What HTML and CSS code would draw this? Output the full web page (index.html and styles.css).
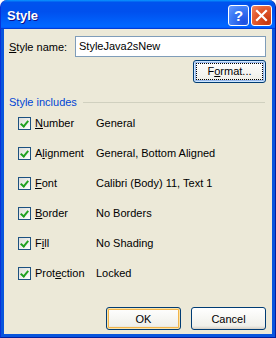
FILE: index.html
```html
<!DOCTYPE html>
<html lang="en">
<head>
    <meta charset="UTF-8">
    <title>Style</title>
    <link rel="stylesheet" href="styles.css">
</head>
<body>
    <div class="window">
        <div class="titlebar">
            <span class="title">Style</span>
            <div class="controls">
                <span class="ctl help">?</span>
                <span class="ctl close">
                    <svg width="13" height="13" viewBox="0 0 13 13"><path d="M2 2 L11 11 M11 2 L2 11" stroke="#fff" stroke-width="2.2" stroke-linecap="square"/></svg>
                </span>
            </div>
        </div>
        <div class="client">
            <div class="name-row">
                <label class="name-label"><u>S</u>tyle name:</label>
                <div class="textbox">StyleJava2sNew</div>
            </div>
            <div class="format-row">
                <button class="btn focused"><span class="focus-rect">F<u>o</u>rmat...</span></button>
            </div>
            <div class="group-head">
                <span>Style includes</span>
                <span class="rule"></span>
            </div>
            <div class="rows">
                <div class="row"><span class="check"></span><span class="key"><u>N</u>umber</span><span class="val">General</span></div>
                <div class="row"><span class="check"></span><span class="key">A<u>l</u>ignment</span><span class="val">General, Bottom Aligned</span></div>
                <div class="row"><span class="check"></span><span class="key"><u>F</u>ont</span><span class="val">Calibri (Body) 11, Text 1</span></div>
                <div class="row"><span class="check"></span><span class="key"><u>B</u>order</span><span class="val">No Borders</span></div>
                <div class="row"><span class="check"></span><span class="key">F<u>i</u>ll</span><span class="val">No Shading</span></div>
                <div class="row"><span class="check"></span><span class="key">Prot<u>e</u>ction</span><span class="val">Locked</span></div>
            </div>
            <div class="actions">
                <button class="btn default">OK</button>
                <button class="btn">Cancel</button>
            </div>
        </div>
    </div>
</body>
</html>
```
FILE: styles.css
```css
body {
    margin: 0;
    padding: 0;
    font-family: "Liberation Sans", Arial, sans-serif;
    font-size: 11px;
    color: #000;
}
.window {
    width: 276px;
    height: 338px;
    box-sizing: border-box;
    display: flex;
    flex-direction: column;
    background: #0855dd;
    border-radius: 7px 7px 0 0;
    border-left: 1px solid #0831d9;
    border-right: 1px solid #001ea0;
    border-bottom: 1px solid #001ea0;
    overflow: hidden;
}
.titlebar {
    height: 29px;
    flex: none;
    display: flex;
    align-items: center;
    justify-content: space-between;
    padding: 0 3px 0 6px;
    background: linear-gradient(180deg, #0997ff, #0053ee 8%, #0050ee 40%, #06f 88%, #06f 93%, #005bff 95%, #003dd7 96%, #003dd7);
    border-radius: 7px 7px 0 0;
}
.title {
    color: #fff;
    font-weight: bold;
    font-size: 13px;
    text-shadow: 1px 1px #0f1089;
    padding-top: 1px;
}
.controls {
    display: flex;
    gap: 2px;
    margin-top: 2px;
}
.ctl {
    width: 21px;
    height: 21px;
    box-sizing: border-box;
    border: 1px solid #fff;
    border-radius: 3px;
    display: flex;
    align-items: center;
    justify-content: center;
}
.help {
    background: radial-gradient(circle at 80% 85%, #1c4fe0, #3d7bf6 60%, #6a9cff);
    color: #fff;
    font-weight: bold;
    font-size: 15px;
}
.close {
    background: radial-gradient(circle at 80% 85%, #c5370f, #e35a2e 60%, #f08a66);
}
.client {
    flex: 1;
    margin: 0 3px 3px;
    background: #ece9d8;
    padding: 7px 6px 0 5px;
    display: flex;
    flex-direction: column;
}
.name-row {
    display: flex;
    align-items: center;
    height: 21px;
}
.name-label {
    width: 66px;
}
.textbox {
    width: 191px;
    height: 21px;
    box-sizing: border-box;
    border: 1px solid #7f9db9;
    background: #fff;
    padding: 0 3px;
    line-height: 19px;
}
.format-row {
    display: flex;
    justify-content: flex-end;
    margin-top: 3px;
}
.btn {
    height: 23px;
    box-sizing: border-box;
    border: 1px solid #003c74;
    border-radius: 3px;
    background: linear-gradient(180deg, #fff, #f0f0ea 85%, #d6d0c5);
    font-family: inherit;
    font-size: 11px;
    color: #000;
    padding: 0;
}
.format-row .btn {
    width: 73px;
}
.focused {
    box-shadow: inset 0 0 0 1px #cee7ff, inset 0 0 0 2px #98b8ea;
}
.focus-rect {
    display: block;
    margin: 2px;
    border: 1px dotted #000;
    line-height: 15px;
}
.group-head {
    display: flex;
    align-items: center;
    margin-top: 13px;
    height: 12px;
    color: #0046d5;
}
.rule {
    flex: 1;
    margin-left: 6px;
    margin-right: 1px;
    border-top: 1px solid #d0d0bf;
}
.rows {
    display: flex;
    flex-direction: column;
    padding-left: 9px;
}
.row {
    height: 30px;
    display: flex;
    align-items: center;
}
.check {
    width: 13px;
    height: 13px;
    box-sizing: border-box;
    border: 1px solid #1c5180;
    background: linear-gradient(135deg, #dcdcd7, #fff) ;
    position: relative;
    margin-right: 4px;
}
.check::after {
    content: "";
    position: absolute;
    left: 3px;
    top: 1px;
    width: 3px;
    height: 6px;
    border: solid #21a121;
    border-width: 0 2px 2px 0;
    transform: rotate(40deg);
}
.key {
    width: 61px;
}
.actions {
    display: flex;
    justify-content: flex-end;
    gap: 10px;
    margin-top: 19px;
}
.actions .btn {
    width: 75px;
}
.default {
    box-shadow: inset 0 0 0 1px #fce4a8, inset 0 0 0 2px #f1b54c;
}
```
